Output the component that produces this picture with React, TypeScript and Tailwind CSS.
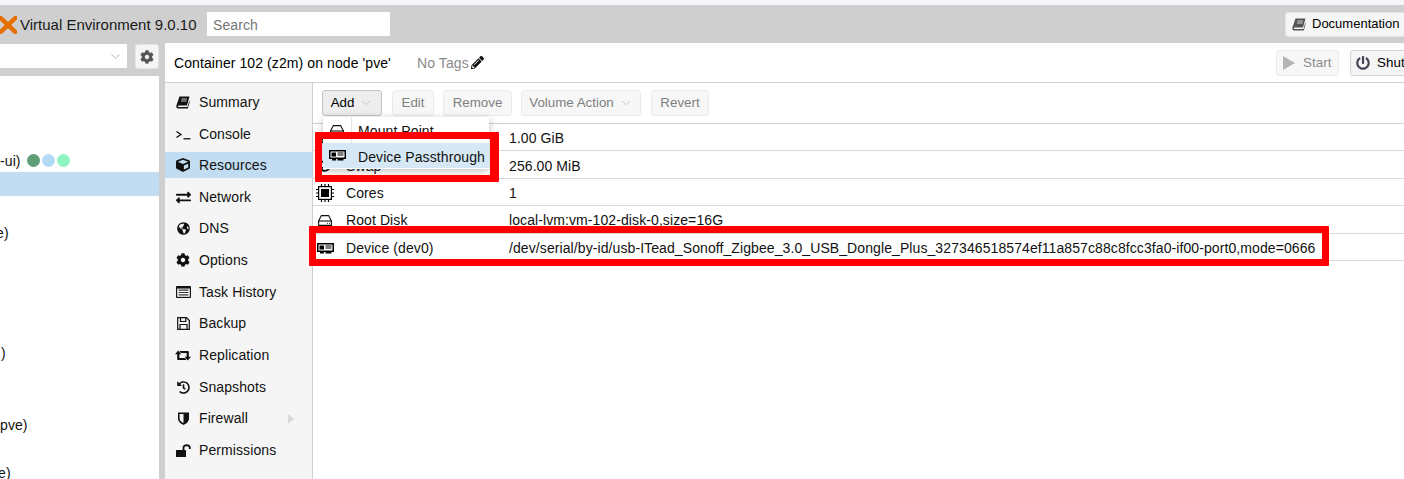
import React from 'react';
import { FaCube, FaExchangeAlt, FaGlobeAmericas, FaCog, FaHistory, FaPencilAlt, FaPowerOff, FaSyncAlt, FaMemory } from 'react-icons/fa';
import { ChevronDown } from 'lucide-react';

// the screenshot uses the older font-awesome glyphs, so these are drawn by hand
function PciIcon({ className }: { className?: string }) {
  return (
    <svg viewBox="0 0 17 11" className={className}>
      <rect x="0" y="0" width="17" height="9" fill="#000" />
      <rect x="1.5" y="1.5" width="14" height="6" fill="#fff" />
      <rect x="2.5" y="2.5" width="4.5" height="4" fill="#000" />
      <rect x="8.5" y="2.5" width="6" height="1" fill="#000" />
      <rect x="8.5" y="4.5" width="6" height="1" fill="#000" />
      <rect x="3" y="9" width="4" height="1.5" fill="#000" />
      <rect x="8.5" y="9" width="6" height="1.5" fill="#000" />
    </svg>
  );
}

function BookIcon({ className }: { className?: string }) {
  return (
    <svg viewBox="0 0 14 13" className={className} fill="currentColor">
      <path d="M3.5 0.5 H13.5 L11 9.5 H2.8 C1.6 9.5 1.4 11 2.8 11 H11.5 L13.2 5 L13.8 5.5 L11.8 12.5 H2.2 C0.6 12.5 0 11 0.4 9.5 Z" />
      <path d="M5.5 3 H11 M5 5 H10.5" stroke="#f5f5f5" strokeWidth="0.8" />
    </svg>
  );
}

function TermIcon() {
  return (
    <svg viewBox="0 0 15 10" className="w-[15px] h-[10px] mt-[2px]" fill="none" stroke="#000" strokeWidth="1.2">
      <path d="M0.5 1.5 L5 4.5 L0.5 7.5" />
      <path d="M7.5 8.8 H14.5" />
    </svg>
  );
}

function TaskIcon() {
  return (
    <svg viewBox="0 0 15 12" className="w-[15px] h-[12px]">
      <rect width="15" height="12" rx="1" fill="#111" />
      <rect x="1.2" y="2.6" width="12.6" height="8.2" fill="#fff" />
      <path d="M2.5 4.2 H12.5 M2.5 6.5 H12.5 M2.5 8.8 H12.5" stroke="#333" strokeWidth="1.2" />
    </svg>
  );
}

function FloppyIcon() {
  return (
    <svg viewBox="0 0 13 13" className="w-[13px] h-[13px]" fill="none" stroke="#111" strokeWidth="1.2">
      <path d="M0.7 0.7 H9.5 L12.3 3.5 V12.3 H0.7 Z" />
      <path d="M3.5 0.7 V4.5 H8.8 V0.7" />
      <path d="M3 12.3 V7.5 H10 V12.3" />
    </svg>
  );
}

function RetweetIcon() {
  return (
    <svg viewBox="0 0 16 11" className="w-[16px] h-[11px]" fill="#111">
      <path d="M0 4.2 L3.2 0.4 L6.4 4.2 H4.4 V8 H10 L11.5 10 H3.4 C2.6 10 2.2 9.6 2.2 8.8 V4.2 Z" />
      <path d="M16 6.8 L12.8 10.6 L9.6 6.8 H11.6 V3 H6 L4.5 1 H12.6 C13.4 1 13.8 1.4 13.8 2.2 V6.8 Z" />
    </svg>
  );
}

function ShieldIcon() {
  return (
    <svg viewBox="0 0 11 13" className="w-[11px] h-[13px]">
      <path d="M0 0.5 H11 V6.5 C11 10 7.5 12 5.5 13 C3.5 12 0 10 0 6.5 Z" fill="#111" />
      <path d="M1.6 2 H5.5 V11 C3.5 10 1.6 9 1.6 6.5 Z" fill="#f5f5f5" />
    </svg>
  );
}

function UnlockIcon() {
  return (
    <svg viewBox="0 0 15 13" className="w-[15px] h-[13px]">
      <rect x="0" y="6" width="10" height="7" rx="0.5" fill="#111" />
      <path d="M7.5 6 V3.5 C7.5 0.5 13.8 0.5 13.8 3.5 V5" fill="none" stroke="#111" strokeWidth="1.8" />
    </svg>
  );
}

function ChipIcon() {
  return (
    <svg viewBox="0 0 18 18" className="w-[18px] h-[18px]" fill="none" stroke="#000">
      <rect x="2.6" y="2.6" width="12.8" height="12.8" strokeWidth="1.2" />
      <rect x="5" y="5" width="8" height="8" fill="#000" stroke="none" />
      <path d="M5.5 0 V2 M9 0 V2 M12.5 0 V2 M5.5 16 V18 M9 16 V18 M12.5 16 V18 M0 5.5 H2 M0 9 H2 M0 12.5 H2 M16 5.5 H18 M16 9 H18 M16 12.5 H18" strokeWidth="1.2" />
    </svg>
  );
}

function HddIcon() {
  return (
    <svg viewBox="0 0 14 11" className="w-[14px] h-[11px]" fill="none" stroke="#111" strokeWidth="1.1">
      <path d="M3.4 0.6 H10.6 L13.4 6 V10.4 H0.6 V6 Z" />
      <path d="M0.6 6 H13.4" />
      <path d="M9 8.2 H9.9 M11 8.2 H11.9" />
    </svg>
  );
}

const navItems = [
  { label: 'Summary', icon: <BookIcon className="w-[14px] h-[13px] text-[#111]" /> },
  { label: 'Console', icon: <TermIcon />, shift: true },
  { label: 'Resources', icon: <FaCube className="text-[14px]" />, active: true },
  { label: 'Network', icon: <FaExchangeAlt className="text-[15px]" /> },
  { label: 'DNS', icon: <FaGlobeAmericas className="text-[13px]" /> },
  { label: 'Options', icon: <FaCog className="text-[14px]" /> },
  { label: 'Task History', icon: <TaskIcon /> },
  { label: 'Backup', icon: <FloppyIcon /> },
  { label: 'Replication', icon: <RetweetIcon /> },
  { label: 'Snapshots', icon: <FaHistory className="text-[13px]" /> },
  { label: 'Firewall', icon: <ShieldIcon />, arrow: true },
  { label: 'Permissions', icon: <UnlockIcon /> },
];

const resourceRows = [
  { key: 'Memory', value: '1.00 GiB', icon: <FaMemory className="text-[14px]" /> },
  { key: 'Swap', value: '256.00 MiB', icon: <FaSyncAlt className="text-[12px]" /> },
  { key: 'Cores', value: '1', icon: <ChipIcon /> },
  { key: 'Root Disk', value: 'local-lvm:vm-102-disk-0,size=16G', icon: <HddIcon /> },
  {
    key: 'Device (dev0)',
    value: '/dev/serial/by-id/usb-ITead_Sonoff_Zigbee_3.0_USB_Dongle_Plus_327346518574ef11a857c88c8fcc3fa0-if00-port0,mode=0666',
    icon: <PciIcon className="w-[17px] h-[11px]" />,
  },
];

// clipped names at the left edge of the tree, row index -> text and how far it is pushed out
const treeRows: Record<number, { text: string; ml: string; dots?: boolean }> = {
  3: { text: '-ui)', ml: 'ml-0', dots: true },
  6: { text: 'e)', ml: 'ml-[-4px]' },
  11: { text: ')', ml: 'ml-[1px]' },
  14: { text: 'pve)', ml: 'ml-0' },
  16: { text: 'e)', ml: 'ml-[-2px]' },
};

function ToolButton({ label, w, menu, active }: { label: string; w: string; menu?: boolean; active?: boolean }) {
  return (
    <div
      className={`${w} h-[26px] rounded-[3px] border flex items-center justify-center gap-[5px] text-[13.33px] tracking-normal ${
        active ? 'border-[#c4c4c4] bg-[#ededed] text-[#000]' : 'border-[#ebebeb] bg-[#f7f7f7] text-[#7f7f7f]'
      }`}
    >
      <span>{label}</span>
      {menu && <ChevronDown className="w-[14px] h-[14px] text-[#c0c0c0]" strokeWidth={1.5} />}
    </div>
  );
}

export default function App() {
  return (
    <div className="relative w-[1404px] h-[479px] overflow-hidden flex flex-col bg-[#cfcfcf] text-[14px] tracking-[0.09px] text-[#111] font-['Liberation_Sans',Arial,sans-serif]">
      <div className="h-[5px] bg-[#f5f5fa] shrink-0" />

      {/* top bar */}
      <div className="h-[38px] shrink-0 flex items-center">
        <svg viewBox="0 0 17 18" className="w-[17px] h-[18px] mt-[1px] shrink-0">
          <path d="M-1 0.5 L17 17.5 M17 0.5 L-1 17.5" stroke="#e57000" strokeWidth="4.5" fill="none" />
        </svg>
        <span className="ml-[3px] pt-[2px] w-[187px] shrink-0 text-[15px] tracking-normal text-[#1a1a1a] whitespace-nowrap">Virtual Environment 9.0.10</span>
        <div className="w-[183px] h-[24px] shrink-0 bg-white flex items-center pl-[6px] pt-[2px] text-[#757575]">Search</div>
        <div className="ml-[895px] w-[125px] h-[25px] shrink-0 rounded-[3px] bg-[#f5f5f5] border border-[#e4e4e4] flex items-center pl-[6px] text-[13px] tracking-normal text-[#000] whitespace-nowrap">
          <BookIcon className="w-[14px] h-[13px] text-[#555] mr-[6px] shrink-0" />
          Documentation
        </div>
      </div>

      <div className="flex-1 flex min-h-0">
        {/* tree side */}
        <div className="w-[159px] shrink-0 flex flex-col">
          <div className="h-[33px] shrink-0 flex items-start pt-[1px]">
            <div className="w-[127px] h-[24px] bg-white flex items-center justify-end pr-[4px]">
              <ChevronDown className="w-[15px] h-[15px] text-[#b0b0b0]" strokeWidth={1.5} />
            </div>
            <div className="ml-[8px] w-[24px] h-[25px] rounded-[3px] bg-[#f5f5f5] border border-[#e4e4e4] flex items-center justify-center">
              <FaCog className="text-[14px] text-[#555]" />
            </div>
          </div>
          <div className="flex-1 bg-white overflow-hidden">
            {Array.from({ length: 17 }).map((_, i) => (
              <div key={i} className={`h-[24px] flex items-center whitespace-nowrap ${i === 4 ? 'bg-[#c2ddf2]' : ''}`}>
                {treeRows[i] && <span className={`${treeRows[i].ml} pt-[2px]`}>{treeRows[i].text}</span>}
                {treeRows[i]?.dots && (
                  <div className="flex gap-[2px] ml-[6px] mt-[1px]">
                    <span className="w-[13px] h-[13px] rounded-full bg-[#5f9e76]" />
                    <span className="w-[13px] h-[13px] rounded-full bg-[#b3daf5]" />
                    <span className="w-[13px] h-[13px] rounded-full bg-[#8ff5bf]" />
                  </div>
                )}
              </div>
            ))}
          </div>
        </div>

        <div className="w-[6px] shrink-0" />

        {/* content panel */}
        <div className="flex-1 min-w-0 flex flex-col bg-white">
          <div className="h-[40px] shrink-0 flex items-center border-b border-[#cfcfcf] whitespace-nowrap">
            <span className="ml-[9px] pt-[1px] w-[243px] shrink-0 text-[#000]">Container 102 (z2m) on node 'pve'</span>
            <span className="text-[#8a8a8a] pt-[1px] w-[54px] shrink-0">No Tags</span>
            <FaPencilAlt className="text-[13px] text-[#111] shrink-0" />
            <div className="ml-[792px] w-[63px] h-[26px] shrink-0 rounded-[3px] border border-[#ebebeb] bg-[#f7f7f7] flex items-center pl-[6px] text-[13.33px] text-[#8a8a8a]">
              <svg viewBox="0 0 12 14" className="w-[12px] h-[14px] mr-[8px]"><path d="M0 0 L12 7 L0 14 Z" fill="#b5b5b5" /></svg>
              Start
            </div>
            <div className="ml-[11px] w-[90px] h-[26px] shrink-0 rounded-[3px] border border-[#d4d4d4] bg-[#f5f5f5] flex items-center pl-[5px] text-[13.33px] text-[#000]">
              <FaPowerOff className="text-[14px] text-[#445] mr-[7px]" />
              Shutdown
            </div>
          </div>

          <div className="flex-1 min-h-0 flex">
            {/* sub nav */}
            <div className="w-[148px] shrink-0 bg-[#f5f5f5] border-r border-[#cfcfcf] pt-[6px] flex flex-col gap-[5.68px]">
              {navItems.map((item) => (
                <div key={item.label} className={`h-[26px] shrink-0 flex items-center ${item.active ? 'bg-[#c2ddf2]' : ''}`}>
                  <div className="ml-[9px] w-[18px] flex justify-center text-[#111]">{item.icon}</div>
                  <span className={`ml-[7px] ${item.shift ? 'pt-[2px]' : ''}`}>{item.label}</span>
                  {item.arrow && <div className="ml-auto mr-[18px] border-y-[5px] border-y-transparent border-l-[6px] border-l-[#d8d8d8]" />}
                </div>
              ))}
            </div>

            <div className="flex-1 min-w-0 flex flex-col">
              <div className="h-[41px] shrink-0 flex items-center pl-[9px] border-b border-[#cfcfcf]">
                <ToolButton label="Add" w="w-[60px]" menu active />
                <div className="ml-[10px]"><ToolButton label="Edit" w="w-[42px]" /></div>
                <div className="ml-[9px]"><ToolButton label="Remove" w="w-[69px]" /></div>
                <div className="ml-[9px]"><ToolButton label="Volume Action" w="w-[120px]" menu /></div>
                <div className="ml-[10px]"><ToolButton label="Revert" w="w-[58px]" /></div>
              </div>
              {resourceRows.map((row) => (
                <div key={row.key} className="h-[27.4px] shrink-0 flex items-center pt-[3px] border-b border-[#d9d9d9] whitespace-nowrap">
                  <div className="ml-[3px] w-[18px] flex justify-center text-[#111]">{row.icon}</div>
                  <span className="ml-[12px] w-[163px] shrink-0">{row.key}</span>
                  <span>{row.value}</span>
                </div>
              ))}
            </div>
          </div>
        </div>
      </div>

      {/* add menu */}
      <div className="absolute left-[323px] top-[117px] w-[166px] h-[52px] bg-white shadow-[0_2px_8px_rgba(0,0,0,0.25)]">
        <div className="h-[26px] flex items-center">
          <div className="w-[29px] h-full border-r border-[#e4e4e4] flex justify-center items-center">
            <HddIcon />
          </div>
          <span className="ml-[6px] pt-[2px]">Mount Point</span>
        </div>
        <div className="h-[25px] flex items-center bg-[#d6e8f5]">
          <div className="w-[29px] flex justify-center">
            <PciIcon className="w-[17px] h-[11px]" />
          </div>
          <span className="ml-[6px] pt-[4px] text-[#111]">Device Passthrough</span>
        </div>
      </div>

      {/* red annotation boxes */}
      <div className="absolute left-[315px] top-[132px] w-[184px] h-[50px] border-[7px] border-r-[9px] border-[#ff0000] rounded-[1px]" />
      <div className="absolute left-[309px] top-[226px] w-[1020px] h-[40px] border-[7px] border-[#ff0000] rounded-[1px]" />
    </div>
  );
}
